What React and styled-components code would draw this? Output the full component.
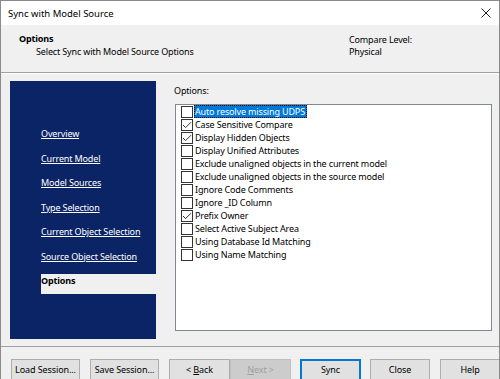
import React from "react";
import styled, { createGlobalStyle } from "styled-components";

const Global = createGlobalStyle`
  html, body { margin: 0; padding: 0; background: #f0f0f0; }
  * { box-sizing: border-box; }
  body { font-family: "Noto Sans", "Segoe UI", sans-serif; }
`;

const FONT = `"Noto Sans", "Segoe UI", sans-serif`;

const Window = styled.div`
  width: 500px;
  height: 379px;
  overflow: hidden;
  display: flex;
  flex-direction: column;
  border: 1px solid #8a8a8a;
  border-bottom: none;
  background: #f0f0f0;
  font-family: ${FONT};
  font-size: 9px;
  letter-spacing: -0.15px;
  color: #000;
`;

const TitleBar = styled.div`
  height: 24px;
  flex: none;
  background: #fff;
  display: flex;
  align-items: center;
  justify-content: space-between;
  padding: 0 6px 0 7px;
  font-size: 9.5px;
  letter-spacing: 0;
  color: #000;
`;

const CloseX = styled.svg`
  width: 10px;
  height: 10px;
  margin-right: 2px;
`;

const Header = styled.div`
  height: 48px;
  flex: none;
  display: flex;
  border-bottom: 1px solid #a0a0a0;
  box-shadow: 0 1px 0 #fff;
`;

const HeaderLeft = styled.div`
  flex: 1;
  padding: 7px 0 0 18px;
  line-height: 13px;
`;

const HeaderTitle = styled.div`
  font-weight: bold;
`;

const HeaderSub = styled.div`
  padding-left: 17px;
`;

const HeaderRight = styled.div`
  width: 150px;
  padding: 9px 0 0 0;
  line-height: 12.4px;
`;

const Body = styled.div`
  flex: none;
  height: 274px;
  display: flex;
  align-items: flex-start;
  padding: 8px 0 0 9px;
  border-bottom: 1px solid #a0a0a0;
`;

const Nav = styled.div`
  width: 146px;
  height: 258px;
  flex: none;
  background: #0b2466;
  display: flex;
  flex-direction: column;
  padding: 46px 0 0 31px;
  gap: 10.5px;
`;

const NavLink = styled.a`
  height: 14px;
  line-height: 14px;
  color: #fff;
  text-decoration: underline;
  white-space: nowrap;
  cursor: pointer;
`;

const NavCurrent = styled.div`
  height: 20px;
  line-height: 14px;
  background: #f0f0f0;
  color: #000;
  font-weight: bold;
`;

const Main = styled.div`
  flex: 1;
  padding: 3px 0 0 17px;
  display: flex;
  flex-direction: column;
`;

const Label = styled.div`
  height: 14px;
  line-height: 14px;
  margin-bottom: 6px;
  margin-left: 1px;
`;

const ListBox = styled.div`
  width: 317px;
  height: 227px;
  margin-left: 2px;
  background: #fff;
  border: 1px solid #828790;
  padding: 0 0 0 5px;
`;

const Row = styled.div`
  height: 13px;
  display: flex;
  align-items: center;
  white-space: nowrap;
`;

const Box = styled.span`
  width: 12px;
  height: 12px;
  flex: none;
  border: 1px solid #333;
  background: #fff;
  display: flex;
  align-items: center;
  justify-content: center;
  margin-right: 1px;
`;

const RowText = styled.span`
  padding: 0 2px 0 1px;
  line-height: 13px;
  background: ${(p) => (p.$selected ? "#0078d7" : "transparent")};
  color: ${(p) => (p.$selected ? "#fff" : "#000")};
  outline: ${(p) => (p.$selected ? "1px dotted #000" : "none")};
  outline-offset: -1px;
`;

const Footer = styled.div`
  flex: none;
  display: flex;
  align-items: flex-start;
  padding: 12px 0 0 10px;
`;

const Button = styled.button`
  height: 23px;
  width: ${(p) => p.$w}px;
  margin-right: ${(p) => p.$mr}px;
  background: ${(p) => (p.$disabled ? "#cccccc" : "#e1e1e1")};
  border: 1px solid ${(p) => (p.$default ? "#0078d7" : p.$disabled ? "#bfbfbf" : "#adadad")};
  box-shadow: ${(p) => (p.$default ? "inset 0 0 0 1px #0078d7" : "none")};
  color: ${(p) => (p.$disabled ? "#a0a0a0" : "#000")};
  font-family: ${FONT};
  font-size: 9px;
  letter-spacing: -0.1px;
  padding: 0 0 3px 0;
  flex: none;
`;

const Check = () => (
  <svg width="10" height="10" viewBox="0 0 10 10">
    <path d="M1 5 L3.6 7.6 L9 2.2" fill="none" stroke="#333" strokeWidth="1" />
  </svg>
);

const navItems = [
  "Overview",
  "Current Model",
  "Model Sources",
  "Type Selection",
  "Current Object Selection",
  "Source Object Selection",
];

const options = [
  ["Auto resolve missing UDPS", false],
  ["Case Sensitive Compare", true],
  ["Display Hidden Objects", true],
  ["Display Unified Attributes", false],
  ["Exclude unaligned objects in the current model", false],
  ["Exclude unaligned objects in the source model", false],
  ["Ignore Code Comments", false],
  ["Ignore _ID Column", false],
  ["Prefix Owner", true],
  ["Select Active Subject Area", false],
  ["Using Database Id Matching", false],
  ["Using Name Matching", false],
];

export default function App() {
  return (
    <>
      <Global />
      <Window>
        <TitleBar>
          <span>Sync with Model Source</span>
          <CloseX viewBox="0 0 10 10">
            <path d="M0.5 0.5 L9.5 9.5 M9.5 0.5 L0.5 9.5" stroke="#222" strokeWidth="1" />
          </CloseX>
        </TitleBar>
        <Header>
          <HeaderLeft>
            <HeaderTitle>Options</HeaderTitle>
            <HeaderSub>Select Sync with Model Source Options</HeaderSub>
          </HeaderLeft>
          <HeaderRight>
            <div>Compare Level:</div>
            <div>Physical</div>
          </HeaderRight>
        </Header>
        <Body>
          <Nav>
            {navItems.map((n) => (
              <NavLink key={n}>{n}</NavLink>
            ))}
            <NavCurrent>Options</NavCurrent>
          </Nav>
          <Main>
            <Label>Options:</Label>
            <ListBox>
              {options.map(([t, c], i) => (
                <Row key={t}>
                  <Box>{c && <Check />}</Box>
                  <RowText $selected={i === 0}>{t}</RowText>
                </Row>
              ))}
            </ListBox>
          </Main>
        </Body>
        <Footer>
          <Button $w={69} $mr={10}>Load Session...</Button>
          <Button $w={69} $mr={10}>Save Session...</Button>
          <Button $w={61} $mr={0}>&lt; <u>B</u>ack</Button>
          <Button $w={61} $mr={9} $disabled><u>N</u>ext &gt;</Button>
          <Button $w={61} $mr={9} $default>Sync</Button>
          <Button $w={60} $mr={10}>Close</Button>
          <Button $w={60} $mr={0}>Help</Button>
        </Footer>
      </Window>
    </>
  );
}
